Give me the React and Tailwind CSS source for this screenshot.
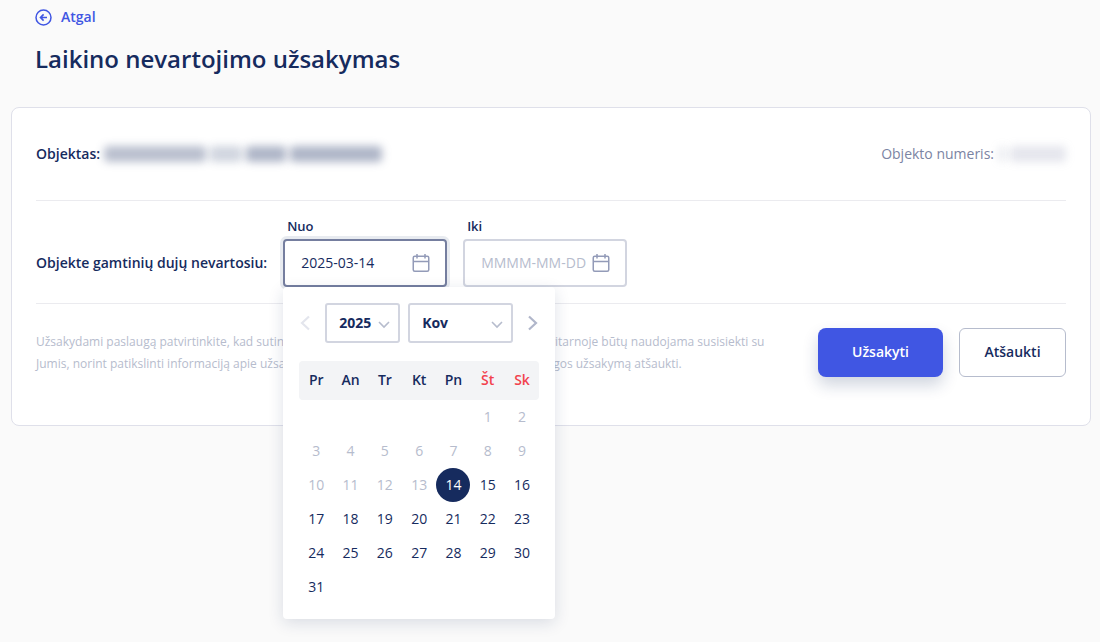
import { useState } from 'react'

const weekdays = ['Pr', 'An', 'Tr', 'Kt', 'Pn', 'Št', 'Sk']
const months = ['Sau', 'Vas', 'Kov', 'Bal', 'Geg', 'Bir', 'Lie', 'Rgp', 'Rgs', 'Spa', 'Lap', 'Gru']

const weeks = [
  [null, null, null, null, null, 1, 2],
  [3, 4, 5, 6, 7, 8, 9],
  [10, 11, 12, 13, 14, 15, 16],
  [17, 18, 19, 20, 21, 22, 23],
  [24, 25, 26, 27, 28, 29, 30],
  [31, null, null, null, null, null, null]
]

const FIRST_AVAILABLE = 14

function BackIcon() {
  return (
    <svg width="17" height="17" viewBox="0 0 17 17" fill="none" stroke="currentColor" strokeWidth="1.5" aria-hidden="true">
      <circle cx="8.5" cy="8.5" r="7.5" />
      <path d="M12 8.5H5.8M8.6 5.4L5.5 8.5l3.1 3.1" strokeWidth="1.6" />
    </svg>
  )
}

function CalendarIcon() {
  return (
    <svg width="18" height="20" viewBox="0 0 18 20" fill="none" stroke="currentColor" strokeWidth="1.5" aria-hidden="true">
      <rect x="1.25" y="3.25" width="15.5" height="15" rx="1.5" />
      <path d="M1.5 8.5h15M5 1v4.5M13 1v4.5" />
    </svg>
  )
}

function Chevron({ d, width, height, strokeWidth }) {
  return (
    <svg width={width} height={height} viewBox={`0 0 ${width} ${height}`} fill="none" stroke="currentColor" strokeWidth={strokeWidth} aria-hidden="true">
      <path d={d} />
    </svg>
  )
}

function DateField({ id, label, value, onChange, onFocus, active, children }) {
  return (
    <div className="relative w-[164px]">
      <label htmlFor={id} className="block h-[22px] pl-1 text-[13px] leading-[18px] font-semibold">{label}</label>
      <div
        className={`flex h-12 items-center rounded border-2 bg-white pr-[15px] pl-4 ${
          active ? 'border-[#757e9f] ring-3 ring-[#e8ebf0]' : 'border-[#d2d5e0]'
        }`}
      >
        <input
          id={id}
          type="text"
          value={value}
          placeholder="MMMM-MM-DD"
          onChange={(e) => onChange(e.target.value)}
          onFocus={onFocus}
          className="w-full min-w-0 bg-transparent text-sm outline-none placeholder:text-[#b6bccd]"
        />
        <button type="button" aria-label={`${label} kalendorius`} onClick={onFocus} className="shrink-0 text-[#939bb8]">
          <CalendarIcon />
        </button>
      </div>
      {children}
    </div>
  )
}

function PickerSelect({ label, value, onChange, options, className }) {
  return (
    <div className={`relative ${className}`}>
      <select
        aria-label={label}
        value={value}
        onChange={(e) => onChange(e.target.value)}
        className="h-10 w-full appearance-none rounded-[3px] border-2 border-[#d2d5e0] bg-white pl-3 text-sm font-bold outline-none"
      >
        {options.map((o) => (
          <option key={o} value={o}>{o}</option>
        ))}
      </select>
      <span className="pointer-events-none absolute inset-y-0 right-[10px] flex items-center pt-1 text-[#b6bccd]">
        <Chevron d="M1 1l5 5 5-5" width={12} height={8} strokeWidth={1.6} />
      </span>
    </div>
  )
}

function DatePicker({ selected, onSelect }) {
  const [year, setYear] = useState('2025')
  const [month, setMonth] = useState('Kov')

  return (
    <div className="absolute top-full left-0 z-10 w-[272px] rounded bg-white px-4 pt-4 pb-[15px] shadow-[0_4px_16px_rgba(22,43,94,0.14)]">
      <div className="flex items-center justify-between">
        <button type="button" aria-label="Ankstesnis mėnuo" disabled className="w-3 text-[#e3e5ed]">
          <Chevron d="M10 1.5L3 8l7 6.5" width={12} height={16} strokeWidth={2.2} />
        </button>
        <div className="flex gap-2">
          <PickerSelect label="Metai" value={year} onChange={setYear} options={['2025', '2026']} className="w-[75px]" />
          <PickerSelect label="Mėnuo" value={month} onChange={setMonth} options={months} className="w-[105px]" />
        </div>
        <button type="button" aria-label="Kitas mėnuo" className="w-3 text-[#b0b6ca]">
          <Chevron d="M2 1.5L9 8l-7 6.5" width={12} height={16} strokeWidth={2.2} />
        </button>
      </div>

      <table className="mt-[18px] w-full table-fixed text-center text-sm">
        <thead>
          <tr className="h-[39px]">
            {weekdays.map((day, i) => (
              <th
                key={day}
                scope="col"
                className={`bg-[#f3f4f6] p-0 font-semibold first:rounded-l last:rounded-r ${i > 4 ? 'text-[#f2424d]' : ''}`}
              >
                {day}
              </th>
            ))}
          </tr>
        </thead>
        <tbody>
          {weeks.map((week, w) => (
            <tr key={w}>
              {week.map((day, i) => (
                <td key={i} className="h-[34px] p-0">
                  {day && (
                    <button
                      type="button"
                      disabled={day < FIRST_AVAILABLE}
                      onClick={() => onSelect(day)}
                      className={`mx-auto block size-[34px] rounded-full ${
                        day === selected ? 'bg-[#162b5e] text-white' : 'disabled:text-[#b6bccd]'
                      }`}
                    >
                      {day}
                    </button>
                  )}
                </td>
              ))}
            </tr>
          ))}
        </tbody>
      </table>
    </div>
  )
}

export default function App() {
  const [from, setFrom] = useState('2025-03-14')
  const [to, setTo] = useState('')
  const [open, setOpen] = useState(true)

  return (
    <div className="min-h-screen bg-[#fafafa] pr-[9px] pb-8 pl-[11px] font-['Open_Sans',sans-serif] text-sm text-[#162b5e]">
      {/* Header */}
      <header className="px-6 pt-[7px]">
        <a href="#" className="inline-flex items-center gap-[9px] font-semibold text-[#4056e3]">
          <BackIcon />
          Atgal
        </a>
        <h1 className="mt-3 text-2xl leading-8 font-semibold">Laikino nevartojimo užsakymas</h1>
      </header>

      <main className="mt-8 rounded-lg border border-[#dfe0ea] bg-white px-6">
        {/* Object */}
        <div className="flex h-[93px] items-center justify-between border-b border-[#ebebef]">
          <div className="flex items-center gap-1">
            <span className="font-semibold">Objektas:</span>
            <span aria-hidden="true" className="flex h-5 items-center gap-1">
              <span className="h-4 w-[102px] rounded-sm bg-[#162b5e]/30 blur-[4px]"></span>
              <span className="h-4 w-8 rounded-sm bg-[#162b5e]/20 blur-[4px]"></span>
              <span className="h-4 w-10 rounded-sm bg-[#162b5e]/35 blur-[4px]"></span>
              <span className="h-4 w-[92px] rounded-sm bg-[#162b5e]/35 blur-[4px]"></span>
            </span>
          </div>
          <div className="flex items-center gap-1 text-[#7b84a3]">
            <span>Objekto numeris:</span>
            <span aria-hidden="true" className="flex h-5 items-center gap-1">
              <span className="h-4 w-2 rounded-sm bg-[#7b84a3]/15 blur-[4px]"></span>
              <span className="h-4 w-14 rounded-sm bg-[#7b84a3]/20 blur-[4px]"></span>
            </span>
          </div>
        </div>

        {/* Period */}
        <div className="flex gap-4 border-b border-[#ebebef] py-4">
          <p className="flex h-12 items-center self-end font-semibold">Objekte gamtinių dujų nevartosiu:</p>
          <DateField id="from" label="Nuo" value={from} onChange={setFrom} onFocus={() => setOpen(true)} active={open}>
            {open && (
              <DatePicker
                selected={Number(from.slice(8))}
                onSelect={(day) => {
                  setFrom(`2025-03-${day}`)
                  setOpen(false)
                }}
              />
            )}
          </DateField>
          <DateField id="to" label="Iki" value={to} onChange={setTo} onFocus={() => setOpen(false)} />
        </div>

        {/* Consent and actions */}
        <div className="flex items-start justify-between gap-8 pt-6 pb-12">
          <p className="max-w-[750px] pt-[3px] text-xs leading-[22px] text-[#b6bccd]">
            Užsakydami paslaugą patvirtinkite, kad sutinkate, kad Jūsų kontaktinė informacija, turima savitarnoje būtų naudojama susisiekti su
            Jumis, norint patikslinti informaciją apie užsakymą. Jūs bet kuriuo metu turėsite progą paslaugos užsakymą atšaukti.
          </p>
          <div className="flex shrink-0 gap-4">
            <button type="button" className="h-[49px] w-[125px] rounded-lg bg-[#4056e3] font-semibold text-white shadow-[0_8px_16px_rgba(22,43,94,0.2)]">
              Užsakyti
            </button>
            <button type="button" className="h-[49px] w-[107px] rounded-md border border-[#b6bccd] bg-white font-semibold">
              Atšaukti
            </button>
          </div>
        </div>
      </main>
    </div>
  )
}
